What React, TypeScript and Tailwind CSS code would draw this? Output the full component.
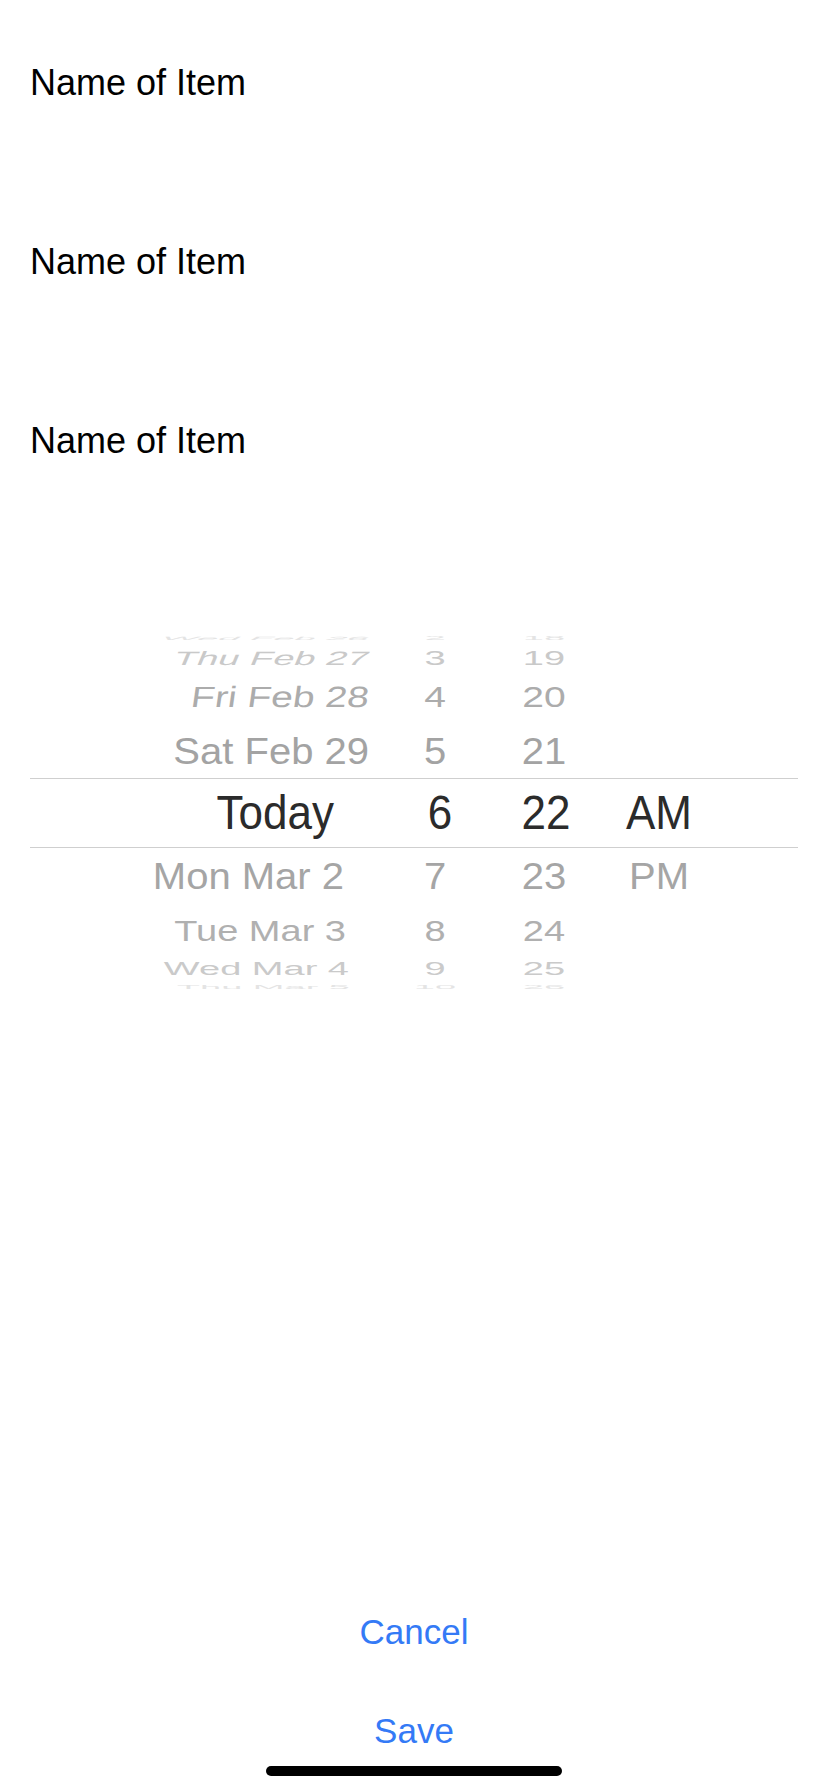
import React from 'react';

type Row = {
  date: string;
  hour: string;
  min: string;
  ampm?: string;
  box: string;
  line: string;
  datePad: string;
};

const above: Row[] = [
  { date: 'Wed Feb 26', hour: '2', min: '18', box: 'h-[20px]', line: 'text-[38px] text-[#e4e4e4] scale-y-[0.12]', datePad: 'pr-[31px] -skew-x-12' },
  { date: 'Thu Feb 27', hour: '3', min: '19', box: 'h-[20px]', line: 'text-[38px] text-[#c9c9c9] scale-y-[0.51]', datePad: 'pr-[31px] -skew-x-12' },
  { date: 'Fri Feb 28', hour: '4', min: '20', box: 'h-[56px]', line: 'text-[39px] text-[#acacac] scale-y-[0.75]', datePad: 'pr-[31px] -skew-x-6' },
  { date: 'Sat Feb 29', hour: '5', min: '21', box: 'h-[54px]', line: 'text-[40px] text-[#a3a3a3] scale-y-[0.91]', datePad: 'pr-[31px]' },
];

const below: Row[] = [
  { date: 'Mon Mar 2', hour: '7', min: '23', ampm: 'PM', box: 'h-[55px]', line: 'text-[40px] text-[#a5a5a5] scale-y-[0.91]', datePad: 'pr-[56px]' },
  { date: 'Tue Mar 3', hour: '8', min: '24', box: 'h-[55px]', line: 'text-[38px] text-[#b0b0b0] scale-y-[0.77]', datePad: 'pr-[54px]' },
  { date: 'Wed Mar 4', hour: '9', min: '25', box: 'h-[21px]', line: 'text-[38px] text-[#cacaca] scale-y-[0.48]', datePad: 'pr-[51px]' },
  { date: 'Thu Mar 5', hour: '10', min: '26', box: 'h-[15px]', line: 'text-[38px] text-[#e4e4e4] scale-y-[0.12]', datePad: 'pr-[50px]' },
];

function PickerRow({ row }: { row: Row }) {
  return (
    <div className={`${row.box} flex items-center overflow-hidden`}>
      <div className={`flex items-center leading-none whitespace-nowrap ${row.line}`}>
        <div className={`w-[370px] text-right ${row.datePad}`}>{row.date}</div>
        <div className="w-[70px] text-center">{row.hour}</div>
        <div className="w-[148px] text-center">{row.min}</div>
        <div className="w-[82px] text-center">{row.ampm ?? ''}</div>
      </div>
    </div>
  );
}

export default function App() {
  return (
    <div className="min-h-[1792px] w-[828px] bg-white flex flex-col font-['Liberation_Sans',Arial,sans-serif] text-black">
      {/* item names */}
      <div className="mt-[62px] flex flex-col gap-[137px] pl-[30px]">
        <div className="text-[36px] leading-[42px]">Name of Item</div>
        <div className="text-[36px] leading-[42px]">Name of Item</div>
        <div className="text-[36px] leading-[42px]">Name of Item</div>
      </div>

      {/* date picker wheel */}
      <div className="mt-[166px] mx-[30px] flex flex-col">
        {above.map(r => (
          <PickerRow key={r.date} row={r} />
        ))}
        <div className="h-[70px] border-y border-[#cfcfcf] flex items-center">
          <div className="flex items-center leading-none whitespace-nowrap text-[44px] text-[#2b2b2b] scale-y-[1.1]">
            <div className="w-[370px] text-right pr-[66px]">Today</div>
            <div className="w-[70px] text-center pl-[10px]">6</div>
            <div className="w-[148px] text-center pl-[4px]">22</div>
            <div className="w-[82px] text-center">AM</div>
          </div>
        </div>
        {below.map(r => (
          <PickerRow key={r.date} row={r} />
        ))}
      </div>

      {/* actions */}
      <div className="mt-auto flex flex-col items-center pb-[16px]">
        <button className="w-full text-center text-[35px] leading-[42px] text-[#347af6]">Cancel</button>
        <button className="mt-[57px] w-full text-center text-[35px] leading-[42px] text-[#347af6]">Save</button>
        <div className="mt-[14px] h-[10px] w-[296px] rounded-full bg-black" />
      </div>
    </div>
  );
}
